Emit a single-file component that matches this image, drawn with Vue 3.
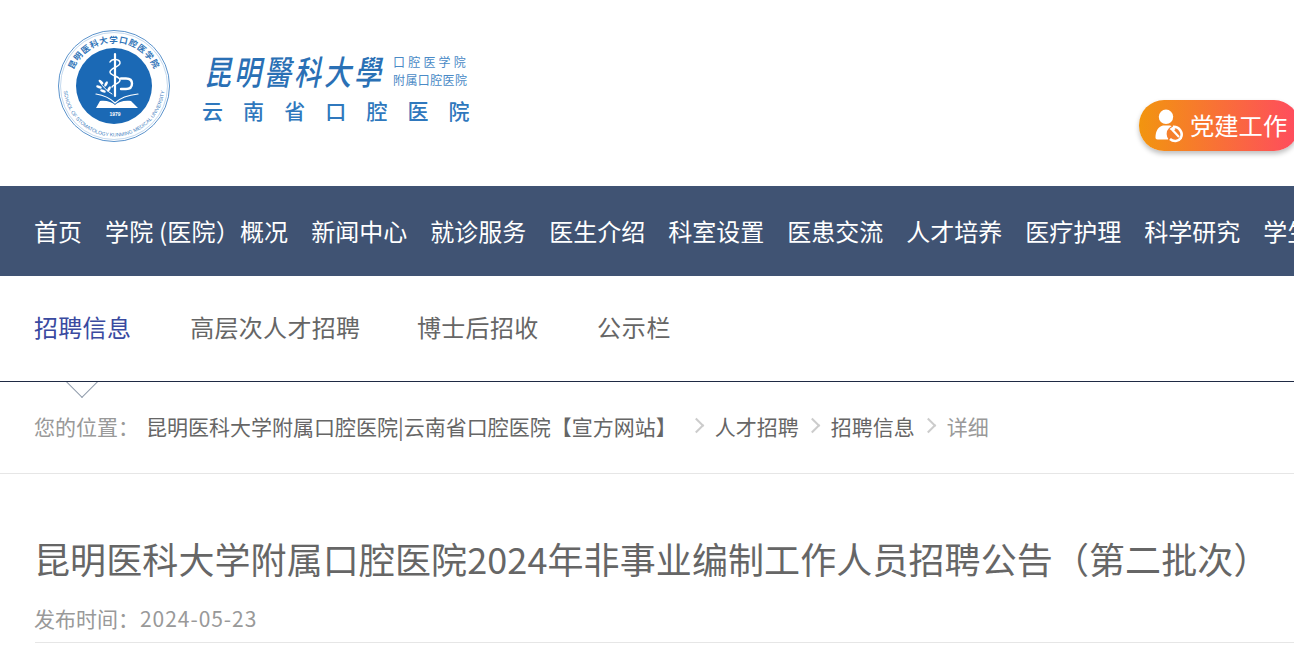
<script setup>
const navItems = ['首页', '学院 (医院）概况', '新闻中心', '就诊服务', '医生介绍', '科室设置', '医患交流', '人才培养', '医疗护理', '科学研究', '学生工作']
const subItems = ['招聘信息', '高层次人才招聘', '博士后招收', '公示栏']
</script>

<template>
  <div class="page">
    <header class="header">
      <svg class="seal" width="114" height="114" viewBox="0 0 114 114">
        <circle cx="57" cy="57" r="55.5" fill="#fff" stroke="#5b93cc" stroke-width="1" />
        <circle cx="57" cy="57" r="53.5" fill="none" stroke="#9cc0e2" stroke-width="0.6" />
        <circle cx="57" cy="57" r="38" fill="#1b69b5" />
        <defs>
          <path id="sealTop" d="M 13.5 57 A 43.5 43.5 0 0 1 100.5 57" />
          <path id="sealBottom" d="M 6.5 57 A 50.5 50.5 0 0 0 107.5 57" />
        </defs>
        <text class="seal-cn"><textPath href="#sealTop" startOffset="50%" text-anchor="middle">昆明医科大学口腔医学院</textPath></text>
        <text class="seal-en"><textPath href="#sealBottom" startOffset="50%" text-anchor="middle">SCHOOL OF STOMATOLOGY KUNMING MEDICAL UNIVERSITY</textPath></text>
        <g fill="none" stroke="#fff" stroke-linecap="round">
          <path d="M58 25 V67" stroke-width="2.2" />
          <path d="M53 33 C55 29 63 30 63 34 C63 38 53 39 53 43 C53 47 63 47 63 51 C63 55 56 55 55 58" stroke-width="1.5" />
          <path d="M64 49.5 H69 C73 49.5 75 51 75 54.5 C75 58 73 60 69 60 H64" stroke-width="2.4" />
          <path d="M43 53 C46 58 50 62 55 65" stroke-width="1" />
          <path d="M39 65 C46 66 53 69 58 74 C63 69 71 66 81 65" stroke-width="1.2" />
        </g>
        <g fill="#fff">
          <ellipse cx="44" cy="53" rx="3" ry="1.3" transform="rotate(40 44 53)" />
          <ellipse cx="42" cy="58" rx="3" ry="1.3" transform="rotate(20 42 58)" />
          <ellipse cx="46" cy="62" rx="3" ry="1.3" transform="rotate(20 46 62)" />
          <ellipse cx="49" cy="55" rx="3" ry="1.3" transform="rotate(-60 49 55)" />
          <ellipse cx="52" cy="60" rx="3" ry="1.3" transform="rotate(-60 52 60)" />
          <path d="M39 79 L43 72 C49 71 55 73 58 76 C61 73 67 71 74 72 L81 79 Z" />
        </g>
        <text class="seal-year" x="58" y="87" text-anchor="middle">1979</text>
      </svg>
      <div class="brand">
        <div class="brand-top">
          <span class="brand-callig">昆明醫科大學</span>
          <div class="brand-side">
            <span class="side-wide">口腔医学院</span>
            <span class="side-narrow">附属口腔医院</span>
          </div>
        </div>
        <div class="brand-name">云南省口腔医院</div>
      </div>
      <div class="party">
        <svg width="29" height="32" viewBox="0 0 29 32">
          <circle cx="12" cy="6.8" r="7.2" fill="#fff" />
          <path d="M1.5 27.5 C1.5 20 5 16.5 9 15.5 H16 C18 16 19 16.5 20 17 L14 29.5 H3.5 C2.2 29.5 1.5 28.8 1.5 27.5 Z" fill="#fff" />
          <circle cx="21" cy="24" r="8.4" fill="#f57f2c" />
          <path d="M19 16.8 C25.5 16.5 29.5 23 26.8 28 C24.5 31.5 19.5 32 16 29" fill="none" stroke="#fff" stroke-width="2.6" />
          <path d="M15.5 19 L19 16.5 L21.5 19 L18.8 21.5 Z" fill="#fff" />
          <path d="M18.5 20 L25 27" stroke="#fff" stroke-width="2.2" />
        </svg>
        <span class="party-label">党建工作</span>
      </div>
    </header>

    <nav class="nav">
      <a v-for="item in navItems" :key="item" class="nav-item">{{ item }}</a>
    </nav>

    <div class="subnav">
      <a
        v-for="(item, i) in subItems"
        :key="item"
        class="sub-item"
        :class="{ active: i === 0 }"
      >{{ item }}</a>
      <span class="notch"></span>
    </div>

    <div class="crumbs">
      <span class="crumb-label">您的位置：</span>
      <span class="crumb-link home">昆明医科大学附属口腔医院|云南省口腔医院【宣方网站】</span>
      <span class="chev first"></span>
      <span class="crumb-link">人才招聘</span>
      <span class="chev"></span>
      <span class="crumb-link">招聘信息</span>
      <span class="chev"></span>
      <span class="crumb-last">详细</span>
    </div>

    <main class="article">
      <h1 class="title">昆明医科大学附属口腔医院2024年非事业编制工作人员招聘公告（第二批次）</h1>
      <div class="meta">发布时间：<span class="date">2024-05-23</span></div>
    </main>
  </div>
</template>

<style>
html, body {
  margin: 0;
  overflow: hidden;
  background: #fff;
}
</style>

<style scoped>
.page {
  width: 1294px;
  height: 663px;
  overflow: hidden;
  font-family: "Noto Sans CJK SC", "Noto Sans", sans-serif;
  background: #fff;
}
.header {
  position: relative;
  height: 186px;
  box-sizing: border-box;
  padding: 29px 0 0 57px;
  display: flex;
  align-items: flex-start;
  gap: 31px;
}
.seal-cn {
  font-size: 8.5px;
  font-weight: 700;
  fill: #2f74b8;
  letter-spacing: 0.9px;
}
.seal-en {
  font-family: "Liberation Sans", sans-serif;
  font-size: 5px;
  fill: #3f80c0;
}
.seal-year {
  font-family: "Liberation Sans", sans-serif;
  font-size: 5px;
  font-weight: 700;
  fill: #fff;
}
.brand {
  margin-top: 20px;
  display: flex;
  flex-direction: column;
}
.brand-top {
  display: flex;
  align-items: center;
  gap: 12px;
  height: 44px;
}
.brand-callig {
  display: inline-block;
  width: 177px;
  margin-left: 2px;
  font-family: "Noto Sans CJK TC", sans-serif;
  font-size: 27px;
  font-weight: 500;
  font-style: italic;
  letter-spacing: 3px;
  color: #2a70b5;
  white-space: nowrap;
  line-height: 44px;
  transform: scaleY(1.25);
}
.brand-side {
  display: flex;
  flex-direction: column;
  gap: 4px;
  font-size: 12px;
  line-height: 14px;
  color: #4a8ac6;
  white-space: nowrap;
}
.side-wide {
  letter-spacing: 3.2px;
}
.side-narrow {
  letter-spacing: 0.4px;
}
.brand-name {
  margin-top: 4px;
  font-size: 21px;
  font-weight: 500;
  line-height: 26px;
  letter-spacing: 20.1px;
  color: #2f78bd;
  white-space: nowrap;
}
.party {
  position: absolute;
  top: 100px;
  left: 1139px;
  width: 160px;
  height: 51px;
  box-sizing: border-box;
  padding-left: 15px;
  border-radius: 25px;
  display: flex;
  align-items: center;
  gap: 7px;
  color: #fff;
  font-size: 24.3px;
  white-space: nowrap;
  background: linear-gradient(90deg, #f2950f, #ff4b5f);
  box-shadow: 0 3px 5px rgba(0, 0, 0, 0.25);
}
.party svg {
  overflow: visible;
}
.party-label {
  margin-bottom: 3px;
}
.nav {
  height: 90px;
  box-sizing: border-box;
  padding-left: 34px;
  display: flex;
  align-items: center;
  gap: 23px;
  background: #405373;
  white-space: nowrap;
}
.nav-item {
  flex: none;
  color: #fff;
  font-size: 24px;
  line-height: 32px;
}
.nav-item:nth-child(2) {
  letter-spacing: 0.2px;
}
.subnav {
  position: relative;
  height: 106px;
  box-sizing: border-box;
  padding: 0 0 4px 34px;
  display: flex;
  align-items: center;
  gap: 58.5px;
  border-bottom: 1px solid #1f2a44;
}
.sub-item {
  font-size: 24px;
  line-height: 32px;
  letter-spacing: 0.3px;
  color: #666;
  white-space: nowrap;
}
.sub-item:nth-child(1) {
  margin-right: 0.5px;
}
.sub-item:nth-child(2) {
  margin-right: -1.8px;
}
.sub-item:nth-child(4) {
  letter-spacing: 0.7px;
}
.sub-item.active {
  color: #3a4aa0;
}
.notch {
  position: absolute;
  left: 65px;
  bottom: -1px;
  width: 34px;
  height: 18px;
  overflow: hidden;
  transform: translateY(18px);
}
.notch::before {
  content: "";
  position: absolute;
  left: 5px;
  top: -13px;
  width: 24px;
  height: 24px;
  box-sizing: border-box;
  background: #fff;
  border-right: 1px solid #8f9bab;
  border-bottom: 1px solid #8f9bab;
  transform: rotate(45deg);
}
.crumbs {
  height: 92px;
  box-sizing: border-box;
  padding: 0 0 4px 34px;
  display: flex;
  align-items: center;
  border-bottom: 1px solid #e6e6e6;
  font-size: 21px;
  white-space: nowrap;
}
.crumb-label {
  width: 112px;
  color: #999;
}
.crumb-link {
  color: #666;
}
.crumb-last {
  color: #999;
}
.chev {
  width: 11px;
  height: 11px;
  margin: 0 13px 0 8px;
  border-top: 2px solid #ccc;
  border-right: 2px solid #ccc;
  transform: rotate(45deg);
  box-sizing: border-box;
  flex: none;
}
.chev.first {
  margin-left: 14px;
}
.article {
  padding: 0 0 0 34px;
}
.title {
  margin: 57px 0 0;
  font-size: 36px;
  line-height: 54px;
  font-weight: 400;
  letter-spacing: 0.1px;
  color: #666;
  white-space: nowrap;
}
.meta {
  height: 58px;
  box-sizing: border-box;
  padding-top: 15px;
  line-height: 36px;
  font-size: 21px;
  text-indent: -1px;
  color: #999;
  border-bottom: 1px solid #e6e6e6;
  margin-left: 1px;
}
.date {
  margin-left: 1px;
  letter-spacing: 0.95px;
}
</style>
